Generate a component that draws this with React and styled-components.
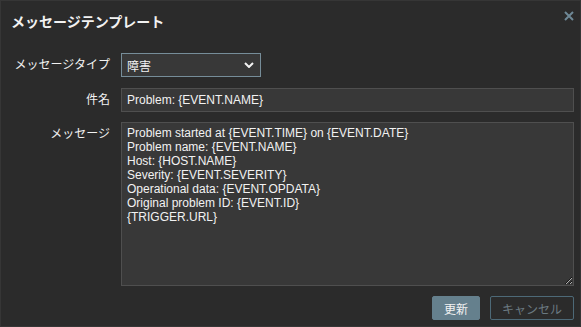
import React from "react";
import styled, { createGlobalStyle } from "styled-components";

const Global = createGlobalStyle`
  html, body { margin: 0; padding: 0; background: #2b2b2b; }
  body { font-family: "Liberation Sans", Arial, "Noto Sans CJK JP", sans-serif; }
`;

const Dialog = styled.div`
  position: relative;
  box-sizing: border-box;
  width: 581px;
  height: 327px;
  background: #2b2b2b;
  border: 1px solid #363636;
  color: #f2f2f2;
  display: flex;
  flex-direction: column;
`;

const Header = styled.div`
  padding: 13px 10px 0 10px;
  height: 39px;
  box-sizing: border-box;
`;

const Title = styled.h4`
  margin: 0;
  font-size: 14px;
  line-height: 16px;
  font-weight: bold;
  color: #f2f2f2;
`;

const Close = styled.button`
  position: absolute;
  top: 8px;
  right: 4px;
  width: 14px;
  height: 14px;
  padding: 0;
  border: 0;
  background: transparent;
  display: flex;
  align-items: center;
  justify-content: center;
  cursor: pointer;
`;

const Form = styled.div`
  display: grid;
  grid-template-columns: 109px 1fr;
  column-gap: 11px;
  row-gap: 10px;
  padding: 13px 6px 0 0;
`;

const Label = styled.label`
  text-align: right;
  font-size: 12px;
  line-height: 14px;
  padding-top: ${(p) => p.$top}px;
  color: #f2f2f2;
`;

const SelectBox = styled.div`
  box-sizing: border-box;
  width: 140px;
  height: 24px;
  background: #383838;
  border: 1px solid #768d99;
  display: flex;
  align-items: center;
  justify-content: space-between;
  padding: 0 6px 0 5px;
  font-size: 12px;
  color: #f2f2f2;
  margin-bottom: 1px;
`;

const Input = styled.input`
  box-sizing: border-box;
  width: 100%;
  height: 24px;
  background: #383838;
  border: 1px solid #4f4f4f;
  color: #f2f2f2;
  font-family: inherit;
  font-size: 12px;
  padding: 0 5px;
  outline: none;
`;

const TextArea = styled.textarea`
  box-sizing: border-box;
  width: 100%;
  height: 164px;
  background: #383838;
  border: 1px solid #4f4f4f;
  color: #f2f2f2;
  font-family: inherit;
  font-size: 12px;
  line-height: 14px;
  padding: 3px 5px;
  margin: 0;
  display: block;
  outline: none;
  resize: both;
`;

const Footer = styled.div`
  display: flex;
  justify-content: flex-end;
  gap: 10px;
  padding: 10px 6px 0 0;
`;

const Button = styled.button`
  box-sizing: border-box;
  height: 24px;
  min-width: ${(p) => (p.$alt ? 84 : 48)}px;
  padding: 0 10px;
  font-family: inherit;
  font-size: 12px;
  border-radius: 2px;
  border: 1px solid ${(p) => (p.$alt ? "#4d6977" : "#65808d")};
  background: ${(p) => (p.$alt ? "transparent" : "#65808d")};
  color: ${(p) => (p.$alt ? "#6b7a82" : "#f2f2f2")};
`;

const Chevron = () => (
  <svg width="10" height="6" viewBox="0 0 10 6">
    <path d="M1 1 L5 5 L9 1" fill="none" stroke="#f2f2f2" strokeWidth="2" />
  </svg>
);

const text = `Problem started at {EVENT.TIME} on {EVENT.DATE}
Problem name: {EVENT.NAME}
Host: {HOST.NAME}
Severity: {EVENT.SEVERITY}
Operational data: {EVENT.OPDATA}
Original problem ID: {EVENT.ID}
{TRIGGER.URL}`;

export default function App() {
  return (
    <>
      <Global />
      <Dialog>
        <Header>
          <Title>メッセージテンプレート</Title>
        </Header>
        <Close aria-label="close">
          <svg width="10" height="10" viewBox="0 0 10 10">
            <path d="M1 1 L9 9 M9 1 L1 9" stroke="#6e8896" strokeWidth="2" />
          </svg>
        </Close>
        <Form>
          <Label $top={5}>メッセージタイプ</Label>
          <SelectBox>
            <span>障害</span>
            <Chevron />
          </SelectBox>
          <Label $top={5}>件名</Label>
          <Input defaultValue="Problem: {EVENT.NAME}" />
          <Label $top={5}>メッセージ</Label>
          <TextArea defaultValue={text} />
        </Form>
        <Footer>
          <Button>更新</Button>
          <Button $alt>キャンセル</Button>
        </Footer>
      </Dialog>
    </>
  );
}
